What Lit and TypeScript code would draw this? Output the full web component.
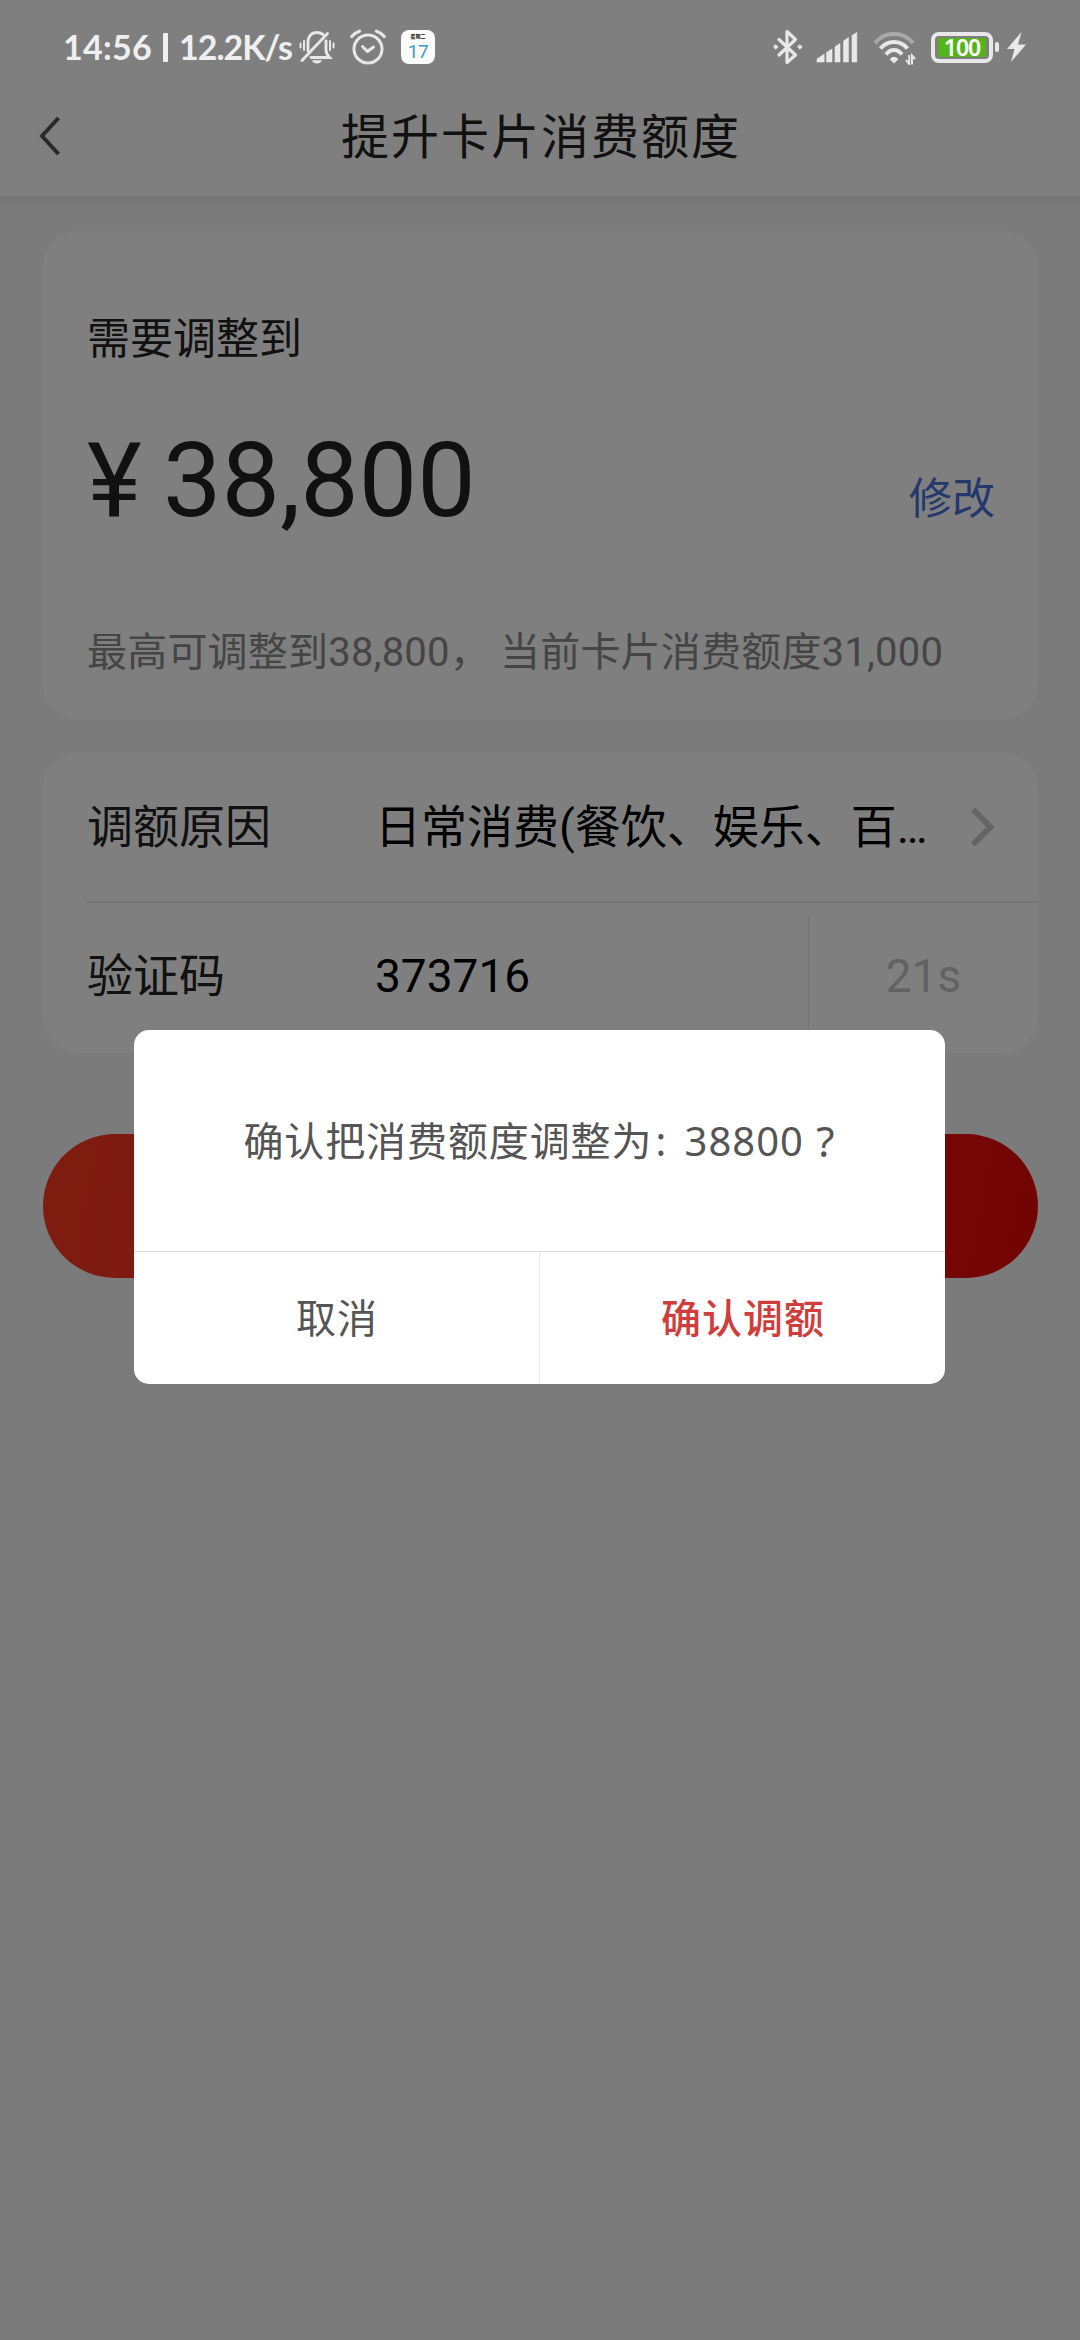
import { LitElement, html, css } from "lit";
import { customElement, state } from "lit/decorators.js";

@customElement("status-bar")
class StatusBar extends LitElement {
  static styles = css`
    :host {
      display: flex;
      align-items: center;
      height: 94px;
      box-sizing: border-box;
      padding: 0 53px 0 63px;
      color: #efefef;
      font-family: Lato, "Noto Sans", sans-serif;
      font-weight: 700;
      font-size: 34px;
      line-height: 40px;
      white-space: nowrap;
    }
    svg { display: block; flex: none; }
    .time { width: 100px; letter-spacing: 0.3px; }
    .bar { width: 5px; height: 29px; background: currentColor; margin-right: 11px; border-radius: 1px; }
    .speed { width: 120px; letter-spacing: -1px; }
    .alarm { margin-left: 15px; }
    .cal {
      margin-left: 15px;
      width: 34px;
      height: 34px;
      border-radius: 8px;
      background: #fbfbfb;
      display: flex;
      flex-direction: column;
      align-items: center;
      box-sizing: border-box;
      padding-top: 2px;
    }
    .week { font: 700 5px/8px "Noto Sans CJK SC", sans-serif; color: #111; }
    .day { font: 400 19px/23px Roboto, sans-serif; color: #3d9cc4; letter-spacing: -0.5px; }
    .space { flex: 1; }
    .signal { margin-left: 13px; }
    .wifi { margin-left: 15px; }
    .battery {
      margin-left: 15px;
      width: 62px;
      height: 31px;
      box-sizing: border-box;
      border: 4px solid #e8e8e8;
      border-radius: 8px;
      padding: 2px 3px;
      display: flex;
    }
    .fill {
      flex: 1;
      background: #55b41c;
      border-radius: 2px;
      color: #fff;
      font: 600 23px/19px "Noto Sans", sans-serif;
      letter-spacing: -1px;
      display: flex;
      justify-content: center;
      align-items: center;
    }
    .nub { width: 4px; height: 10px; border-radius: 2px; background: #e8e8e8; margin-left: 2px; }
    .bolt { margin-left: 7px; }
  `;

  render() {
    return html`
      <span class="time">14:56</span>
      <span class="bar"></span>
      <span class="speed">12.2K/s</span>
      <svg width="36" height="36" viewBox="0 0 36 36" fill="none" stroke="#e8e8e8" stroke-width="2.900" stroke-linecap="round">
        <path d="M9 22V13.500C9 7.500 12.500 3.500 18 3.500c2.400 0 4.400 .7 6 2M27 12v9c0 3 1 5 3.500 7.500H12" />
        <path d="M3 31.500 28.500 4.500" />
        <path d="M5 12v9M1.500 14.500v4M31 12v9M34.500 14.500v4" stroke-width="2" />
        <path d="M13 31.200h10c-1 2.300-2.500 3.300-5 3.300s-4-1-5-3.300z" fill="#e8e8e8" stroke="none" />
      </svg>
      <svg class="alarm" width="36" height="36" viewBox="0 0 36 36" fill="none" stroke="#e8e8e8" stroke-width="3" stroke-linecap="round">
        <circle cx="18" cy="20" r="14" />
        <path d="M12.500 17.500 17.500 22.500 23.500 18" stroke-linejoin="round" />
        <path d="M1.800 7.500Q5 3.500 9.500 2.200M34.200 7.500Q31 3.500 26.500 2.200" stroke-width="3.200" />
      </svg>
      <span class="cal"><span class="week">星期二</span><span class="day">17</span></span>
      <span class="space"></span>
      <svg width="30" height="36" viewBox="0 0 30 36" fill="none" stroke="#e8e8e8" stroke-width="3.200" stroke-linejoin="round" stroke-linecap="round">
        <path d="M6 10.500 22.500 26 14 33.500V2.500L22.500 10.500 6 26" />
        <path d="M2.800 15.800 5 18l-2.200 2.200L.6 18zM27 15.800 29.200 18l-2.200 2.200-2.200-2.200z" fill="#e8e8e8" stroke-width="0.900" />
      </svg>
      <svg class="signal" width="42" height="32" viewBox="0 0 42 32" fill="#e8e8e8" stroke="#e8e8e8" stroke-width="0.600" stroke-linejoin="round">
        <path d="M1 28 8.200 23v8H1zM10.500 21.500l5.500-3.500v13h-5.500zM19 15.800l5-3.300V31h-5zM27.500 10l5-3.500V31h-5zM36 4.500l4.800-3V31H36z" />
      </svg>
      <svg class="wifi" width="43" height="36" viewBox="0 0 43 36" fill="none" stroke="#e8e8e8" stroke-width="4">
        <path d="M2 14Q9 5 21 5t19 9" stroke="#a9a9a9" />
        <path d="M7.500 19.500Q13 13 21 13t13.500 6.500" />
        <path d="M13 25.500Q16.500 21 21 21t8 4.500" />
        <path d="M21 34.500l-4.300-4.300Q21 25.500 25.300 30.200z" fill="#e8e8e8" stroke="none" />
        <path d="M36.200 26v9L33 31M39 35.500V26.500L42 30" stroke-width="2" />
      </svg>
      <span class="battery"><span class="fill">100</span></span>
      <span class="nub"></span>
      <svg class="bolt" width="21" height="30" viewBox="0 0 21 30" fill="#e8e8e8">
        <path d="M15.500 0 1 17h7.500L5 30 20 12.500h-8z" />
      </svg>
    `;
  }
}

@customElement("confirm-dialog")
class ConfirmDialog extends LitElement {
  static styles = css`
    :host {
      display: flex;
      flex-direction: column;
      width: 811px;
      height: 354px;
      border-radius: 15px;
      background: #fff;
      overflow: hidden;
      color: #555;
      font-family: "Noto Sans", "Noto Sans CJK SC", sans-serif;
      font-size: 40px;
      line-height: 60px;
      letter-spacing: 1px;
      white-space: pre;
    }
    .message { flex: 1; display: flex; align-items: center; justify-content: center; padding-top: 1px; }
    .title { letter-spacing: 0.9px; }
    .colon { margin: 0 6px 0 3px; }
    .mark { font-size: 42px; margin-left: 1px; }
    .actions { display: flex; height: 132px; border-top: 1px solid #dcdcdc; }
    .action { flex: 1; display: flex; align-items: center; justify-content: center; padding-left: 1px; }
    .primary { color: #cf3d3d; font-weight: 500; border-left: 1px solid #e8e8e8; }
  `;

  render() {
    return html`
      <div class="message"><span class="title">确认把消费额度调整为</span><span class="colon">: </span><span>38800 </span><span class="mark">?</span></div>
      <div class="actions">
        <div class="action">取消</div>
        <div class="action primary">确认调额</div>
      </div>
    `;
  }
}

@customElement("app-root")
class AppRoot extends LitElement {
  static styles = css`
    :host {
      display: block;
      position: relative;
      width: 1080px;
      height: 2340px;
      overflow: hidden;
      background: #f6f6f6;
      color: #222;
      font-family: Roboto, "Noto Sans CJK SC", sans-serif;
      line-height: 60px;
      white-space: nowrap;
    }
    .page { display: flex; flex-direction: column; padding-top: 94px; background: #fff; }
    .header {
      height: 102px;
      display: grid;
      grid-template-columns: 100px 1fr 100px;
      align-items: center;
      background: #fff;
    }
    .back { margin-left: 38px; margin-top: -18px; display: block; }
    .title { text-align: center; font-size: 48px; letter-spacing: 2px; margin-top: -14px; padding-left: 2px; }
    .content {
      display: flex;
      flex-direction: column;
      padding: 35px 42px 0 43px;
      height: 2109px;
      background: linear-gradient(#ececec, #f3f3f3 10px, #f6f6f6 24px);
    }
    .card { background: #fff; border-radius: 36px; }
    .limit { height: 488px; box-sizing: border-box; padding: 78px 43px 0 44px; }
    .label { font-size: 43px; }
    .amount-row { display: flex; justify-content: space-between; margin-top: 52px; height: 151px; border-bottom: 1px solid #fcfcfc; }
    .amount { display: flex; font-size: 104px; line-height: 120px; }
    .currency { width: 76px; }
    .edit { font-size: 43px; color: #4870dc; margin-top: 48px; }
    .tip { margin-top: 50px; font-size: 40px; color: #8a8a8a; letter-spacing: 0.2px; white-space: pre; }
    .form { margin-top: 34px; height: 300px; font-size: 46px; padding-left: 44px; box-sizing: border-box; }
    .row { display: flex; align-items: center; height: 150px; border-bottom: 2px solid #e8e8e8; box-sizing: border-box; }
    .row:last-child { border: 0; height: 146px; }
    .name { width: 288px; }
    .value { color: #000; width: 556px; }
    .arrow { margin-left: 39px; display: block; }
    .code { color: #000; flex: 1; }
    .timer {
      width: 229px;
      height: 120px;
      display: flex;
      align-items: center;
      justify-content: center;
      border-left: 1px solid #e4e4e4;
      color: #c4c4c4;
    }
    .submit { margin-top: 81px; height: 144px; border-radius: 72px; background: linear-gradient(100deg, #ff3a22, #e60808); }
    .mask {
      position: absolute;
      inset: 0;
      background: rgba(0, 0, 0, 0.5);
      display: flex;
      flex-direction: column;
      align-items: flex-start;
    }
    status-bar { width: 100%; flex: none; }
    confirm-dialog { margin: 936px 0 0 134px; }
  `;

  @state() amount = 38800;

  render() {
    return html`
      <div class="page">
        <div class="header">
          <svg class="back" width="24" height="40" viewBox="0 0 24 40" fill="none" stroke="#555" stroke-width="4">
            <path d="M20.500 2 4 20l16.500 18" />
          </svg>
          <div class="title">提升卡片消费额度</div>
        </div>
        <div class="content">
          <section class="card limit">
            <div class="label">需要调整到</div>
            <div class="amount-row">
              <div class="amount"><span class="currency">¥</span><span>${this.amount.toLocaleString("en-US")}</span></div>
              <span class="edit">修改</span>
            </div>
            <div class="tip">最高可调整到38,800， 当前卡片消费额度31,000</div>
          </section>
          <section class="card form">
            <div class="row">
              <span class="name">调额原因</span>
              <span class="value">日常消费(餐饮、娱乐、百…</span>
              <svg class="arrow" width="28" height="42" viewBox="0 0 28 42" fill="none" stroke="#cacaca" stroke-width="6">
                <path d="M3 3.500 20.500 21 3 38.500" />
              </svg>
            </div>
            <div class="row">
              <span class="name">验证码</span>
              <span class="code">373716</span>
              <span class="timer">21s</span>
            </div>
          </section>
          <div class="submit"></div>
        </div>
      </div>
      <div class="mask">
        <status-bar></status-bar>
        <confirm-dialog></confirm-dialog>
      </div>
    `;
  }
}
